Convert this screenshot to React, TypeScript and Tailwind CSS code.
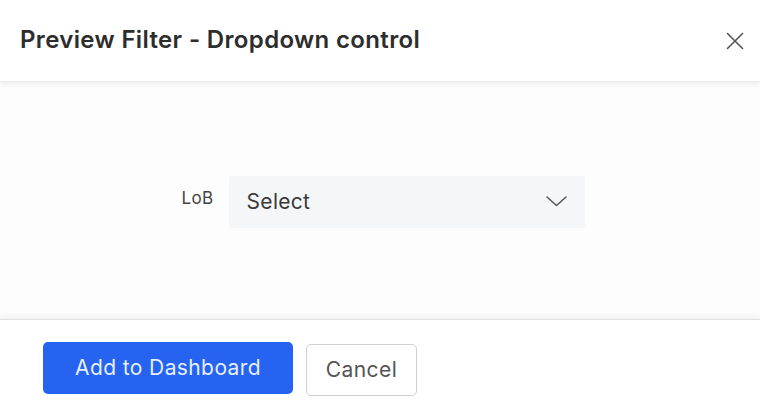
import React from "react";

export default function App() {
  return (
    <div
      className="w-[760px] h-[402px] bg-white flex flex-col overflow-hidden"
      style={{ fontFamily: "Inter, 'Noto Sans', sans-serif" }}
    >
      <header className="h-[82px] shrink-0 flex items-center justify-between pl-[20px] pr-[15px] bg-white relative z-10 shadow-[0_2px_6px_rgba(0,0,0,0.07)] border-b border-[#ececec]">
        <h1 className="text-[24px] font-semibold text-[#2d2d2d] tracking-[0.35px] -mt-[2px]">
          Preview Filter - Dropdown control
        </h1>
        <button className="w-[20px] h-[20px] flex items-center justify-center text-[#555]">
          <svg width="18" height="18" viewBox="0 0 18 18" fill="none" stroke="currentColor" strokeWidth="1.6" strokeLinecap="round">
            <path d="M1.5 1.5L16.5 16.5M16.5 1.5L1.5 16.5" />
          </svg>
        </button>
      </header>
      <main className="flex-1 flex items-center justify-center bg-[#fdfdfd]">
        <div className="flex items-center gap-[15px] ml-[6px] mt-[2px]">
          <span className="text-[17px] text-[#444] tracking-[0.4px] -mt-[6px]">LoB</span>
          <div className="w-[356px] h-[52px] bg-[#f5f6f7] rounded-[3px] flex items-center justify-between pl-[18px] pr-[18px]">
            <span className="text-[21px] text-[#3a3a3a] tracking-[0.3px]">Select</span>
            <svg width="21" height="11" viewBox="0 0 21 11" fill="none" stroke="#555" strokeWidth="1.5" strokeLinecap="round" strokeLinejoin="round">
              <path d="M1 1L10.5 9.5L20 1" />
            </svg>
          </div>
        </div>
      </main>
      <footer className="h-[83px] shrink-0 border-t border-[#e2e2e2] shadow-[0_-3px_6px_rgba(0,0,0,0.05)] bg-white flex items-start gap-[13px] pl-[43px] pt-[22px] relative z-10">
        <button className="w-[250px] h-[52px] rounded-[5px] bg-[#2563f0] text-[#e6efff] text-[21px] tracking-[0.4px]">
          Add to Dashboard
        </button>
        <button className="w-[111px] h-[52px] mt-[2px] rounded-[5px] border border-[#cfcfcf] bg-white text-[#555] text-[21px] tracking-[0.4px]">
          Cancel
        </button>
      </footer>
    </div>
  );
}
